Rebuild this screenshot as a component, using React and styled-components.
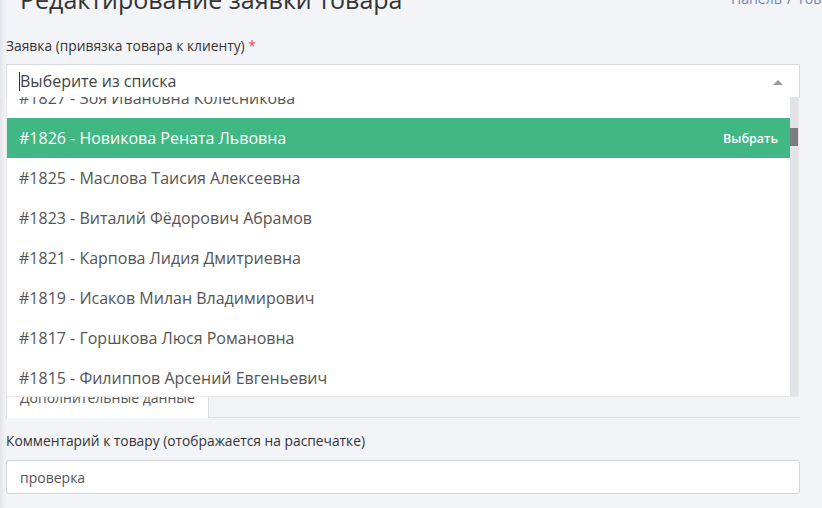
import React from "react";
import styled, { createGlobalStyle } from "styled-components";

const GlobalStyle = createGlobalStyle`
  html, body { margin: 0; padding: 0; }
  body {
    background: linear-gradient(to right, #e3e4e9 0px, #eef0f4 4px, #f3f4f8 7px);
    font-family: "Open Sans", "Noto Sans", sans-serif;
    color: #333;
    overflow: hidden;
  }
`;

const Page = styled.div`
  width: 794px;
  margin: -19px 0 0 6px;
`;

const Header = styled.header`
  display: flex;
  align-items: flex-start;
  height: 36px;
`;

const Title = styled.h1`
  margin: 1px 0 0 14px;
  font-size: 25px;
  line-height: 35px;
  font-weight: 400;
  color: #333;
  white-space: nowrap;
`;

const Breadcrumb = styled.div`
  margin: 9px 0 0 auto;
  width: 69px;
  font-size: 14px;
  line-height: 18px;
  color: #6b88ad;
  white-space: nowrap;
  & span { color: #777; margin: 0 5px; }
`;

const FormGroup = styled.div`
  padding-top: ${(p) => p.$top || 0}px;
`;

const Label = styled.label`
  display: block;
  font-size: 13.8px;
  line-height: 18px;
  color: #333;
  margin-bottom: ${(p) => p.$gap || 9}px;
  & em { color: #d9534f; font-style: normal; }
`;

const SelectWrap = styled.div`
  position: relative;
`;

const SelectBox = styled.div`
  display: flex;
  align-items: center;
  justify-content: space-between;
  box-sizing: border-box;
  height: 34px;
  padding: 0 16px 0 12px;
  background: #fff;
  border: 1px solid #d9dbe0;
  border-bottom-color: #e8e8e8;
`;

const Placeholder = styled.div`
  display: flex;
  align-items: center;
  font-size: 16px;
  color: #444;
  line-height: 22px;
`;

const Caret = styled.span`
  display: inline-block;
  width: 1px;
  height: 19px;
  background: #333;
`;

const Arrow = styled.span`
  width: 0;
  height: 0;
  border-left: 5px solid transparent;
  border-right: 5px solid transparent;
  border-bottom: 5px solid #9a9a9a;
  margin-top: 2px;
`;

const Dropdown = styled.div`
  position: absolute;
  top: 33px;
  left: 0;
  width: 793px;
  height: 300px;
  box-sizing: border-box;
  display: flex;
  background: #fff;
  border: 1px solid #e8e8e8;
  border-top: none;
  overflow: hidden;
  z-index: 10;
`;

const OptionList = styled.ul`
  flex: 1;
  list-style: none;
  margin: -19px 0 0 -1px;
  padding: 0;
`;

const Option = styled.li`
  display: flex;
  justify-content: space-between;
  align-items: center;
  height: 40px;
  padding: 0 12px 0 13px;
  font-size: 16px;
  color: ${(p) => (p.$active ? "#fff" : "#555")};
  background: ${(p) => (p.$active ? "#41b883" : "transparent")};
`;

const SelectHint = styled.span`
  font-size: 12.5px;
  font-weight: 600;
  color: #fff;
`;

const ScrollTrack = styled.div`
  width: 8px;
  background: #e2e3e7;
  display: flex;
  flex-direction: column;
`;

const ScrollThumb = styled.div`
  margin-top: 31px;
  height: 18px;
  background: #7b7c82;
`;

const TabNav = styled.div`
  display: flex;
  margin-top: 279px;
  border-bottom: 1px solid #dcdde1;
`;

const Tab = styled.div`
  box-sizing: border-box;
  width: 203px;
  padding: 10px 13px;
  font-size: 14px;
  line-height: 20px;
  color: #555;
  background: #fff;
  border: 1px solid #dcdde1;
  border-bottom: none;
  margin-bottom: -1px;
  white-space: nowrap;
`;

const Input = styled.div`
  box-sizing: border-box;
  height: 34px;
  display: flex;
  align-items: center;
  padding: 0 13px;
  background: #fff;
  border: 1px solid #d2d4d9;
  border-radius: 3px;
  font-size: 14px;
  color: #555;
`;

const options = [
  "#1827 - Зоя Ивановна Колесникова",
  "#1826 - Новикова Рената Львовна",
  "#1825 - Маслова Таисия Алексеевна",
  "#1823 - Виталий Фёдорович Абрамов",
  "#1821 - Карпова Лидия Дмитриевна",
  "#1819 - Исаков Милан Владимирович",
  "#1817 - Горшкова Люся Романовна",
  "#1815 - Филиппов Арсений Евгеньевич",
  "#1813 - Ковалёва Вера Петровна",
];

export default function App() {
  return (
    <>
      <GlobalStyle />
      <Page>
        <Header>
          <Title>Редактирование заявки товара</Title>
          <Breadcrumb>
            Панель<span>/</span>Товары
          </Breadcrumb>
        </Header>

        <FormGroup $top={20}>
          <Label>
            Заявка (привязка товара к клиенту) <em>*</em>
          </Label>
          <SelectWrap>
            <SelectBox>
              <Placeholder>
                <Caret />
                Выберите из списка
              </Placeholder>
              <Arrow />
            </SelectBox>
            <Dropdown>
              <OptionList>
                {options.map((o, i) => (
                  <Option key={o} $active={i === 1}>
                    <span>{o}</span>
                    {i === 1 && <SelectHint>Выбрать</SelectHint>}
                  </Option>
                ))}
              </OptionList>
              <ScrollTrack>
                <ScrollThumb />
              </ScrollTrack>
            </Dropdown>
          </SelectWrap>
        </FormGroup>

        <TabNav>
          <Tab>Дополнительные данные</Tab>
        </TabNav>

        <FormGroup $top={14}>
          <Label $gap={10}>Комментарий к товару (отображается на распечатке)</Label>
          <Input>проверка</Input>
        </FormGroup>
      </Page>
    </>
  );
}
